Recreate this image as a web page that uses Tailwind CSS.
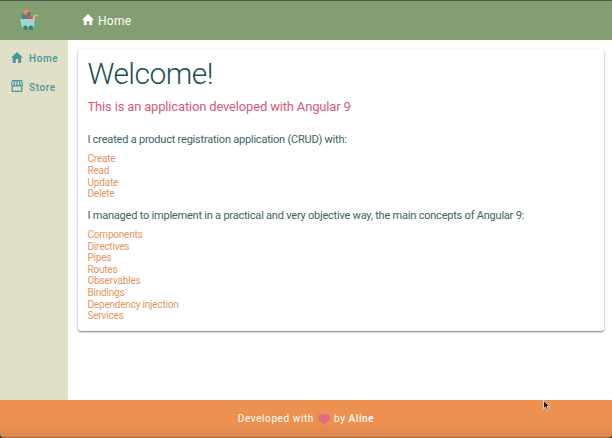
<!DOCTYPE html>
<html lang="en">
<head>
<meta charset="utf-8">
<title>Home</title>
<script src="https://cdn.jsdelivr.net/npm/@tailwindcss/browser@4"></script>
</head>
<body class="relative flex h-[438px] w-[612px] flex-col overflow-hidden bg-white font-['Roboto',sans-serif]">
<header class="flex h-10 shrink-0 items-center border-t border-[#4c5d45] bg-[#849e74] text-white">
  <div class="w-[82px] pl-[19px]">
    <svg class="-mt-px h-[22px] w-5" viewBox="0 0 20 22">
      <path d="M2.500 6 6 2.500 8 10H3z" fill="#5f7c70"/>
      <circle cx="7.500" cy="3.500" r="2.900" fill="#e8894f"/>
      <path d="M3 5.500h5.500v4.500H3z" fill="#4a8587"/>
      <path d="M8.500 3h3v7h-3z" fill="#72705e"/>
      <path d="M8.500 7.500 11 6l2 2v3H8.500z" fill="#dd5368"/>
      <path d="M18.700 6.500h-3.300l-1 5" fill="none" stroke="#e9b56c" stroke-width="1.700"/>
      <path d="M1 10h14.700l-.7 8.500H3z" fill="#99d9d1"/>
      <circle cx="6.500" cy="18.800" r="2.300" fill="#347f88"/>
      <circle cx="12" cy="18.800" r="2.300" fill="#347f88"/>
    </svg>
  </div>
  <svg class="-mt-[3px] h-[11px] w-3" viewBox="2 3 20 17" preserveAspectRatio="none" fill="currentColor"><path d="M10 20v-6h4v6h5v-8h3L12 3 2 12h3v8z"/></svg>
  <span class="ml-[4px] text-[12px] leading-5 tracking-[0.300px]">Home</span>
</header>
<div class="flex h-[360px] shrink-0">
  <nav class="flex w-[68px] shrink-0 flex-col bg-[#e0e0c6] pt-[4px] text-[10px] font-medium tracking-[0.600px] text-[#4b9699]">
    <a class="flex h-[29px] items-center pl-[11px]"><svg class="-mt-[3px] mr-[6px] h-[11px] w-3" viewBox="2 3 20 17" preserveAspectRatio="none" fill="currentColor"><path d="M10 20v-6h4v6h5v-8h3L12 3 2 12h3v8z"/></svg><span>Home</span></a>
    <a class="flex h-[29px] items-center pl-[11px]"><svg class="-mt-[3px] mr-[6px] h-3 w-3" viewBox="2 3 20 18" preserveAspectRatio="none" fill="currentColor"><path d="M21.900 8.890l-1.050-4.370c-.22-.900-1-1.520-1.910-1.520H5.050c-.9 0-1.690.63-1.900 1.520L2.100 8.890c-.24 1.020-.02 2.060.62 2.880.08.110.190.190.280.290V19c0 1.100.9 2 2 2h14c1.100 0 2-.9 2-2v-6.940c.09-.09.200-.18.280-.28.640-.82.870-1.870.62-2.890zm-2.990-3.900l1.050 4.370c.1.420.01.840-.25 1.170-.14.180-.44.470-.94.470-.61 0-1.140-.49-1.210-1.140L16.980 5l1.930-.01zM13 5h1.960l.54 4.520c.05.390-.07.780-.33 1.070-.22.260-.54.410-.95.410-.67 0-1.220-.59-1.220-1.310V5zM8.490 9.520L9.040 5H11v4.690c0 .72-.55 1.310-1.290 1.310-.34 0-.65-.15-.89-.41-.25-.29-.37-.68-.33-1.070zm-4.450-.16L5.050 5h1.970l-.58 4.860c-.08.650-.6 1.140-1.210 1.140-.49 0-.8-.29-.93-.47-.27-.32-.36-.75-.26-1.170zM5 19v-6.030c.08.010.150.030.230.030.87 0 1.660-.36 2.240-.95.600.6 1.400.95 2.310.95.870 0 1.650-.36 2.230-.93.590.57 1.390.93 2.290.93.840 0 1.640-.35 2.240-.95.580.59 1.370.95 2.240.95.080 0 .150-.02.230-.03V19H5z"/></svg><span>Store</span></a>
  </nav>
  <main class="flex-1 pt-[9px] pr-2 pl-[10px]">
    <section class="h-[282px] rounded-[3px] bg-white pt-[9px] pr-[9px] pl-[9.500px] text-[#3d6364] shadow-[0_1px_3px_rgba(0,0,0,0.28),0_1px_1px_rgba(0,0,0,0.3)]">
      <h1 class="text-[30px] leading-[32px] font-light tracking-[-0.550px] text-[#1f5052]">Welcome!</h1>
      <h2 class="mt-[8px] text-[13px] leading-[18px] tracking-[-0.170px] text-[#d75b7b]">This is an application developed with Angular 9</h2>
      <p class="mt-[17px] text-[11px] leading-[14px] tracking-[-0.215px]">I created a product registration application (CRUD) with:</p>
      <ul class="mt-[6.400px] text-[10px] leading-[11.600px] tracking-[-0.200px] text-[#e39660]"><li>Create</li><li>Read</li><li>Update</li><li>Delete</li></ul>
      <p class="mt-[9.200px] text-[11px] leading-[14px] tracking-[-0.215px]">I managed to implement in a practical and very objective way, the main concepts of Angular 9:</p>
      <ul class="mt-[6px] text-[10px] leading-[11.600px] tracking-[-0.200px] text-[#e39660]"><li>Components</li><li>Directives</li><li>Pipes</li><li>Routes</li><li>Observables</li><li>Bindings</li><li>Dependency injection</li><li>Services</li></ul>
    </section>
  </main>
</div>
<footer class="flex h-[38px] shrink-0 items-center justify-center border-b border-[#9f683f] bg-linear-to-b from-[#ed9150] from-60% to-[#db874e] text-[10px] tracking-[0.600px] text-white">
  <span>Developed with</span>
  <svg class="mx-[4px] mt-px h-[11px] w-3" viewBox="2 3 20 18.350" preserveAspectRatio="none" fill="#e36a83"><path d="M12 21.350l-1.450-1.320C5.400 15.360 2 12.280 2 8.500 2 5.420 4.420 3 7.500 3c1.740 0 3.410.81 4.500 2.090C13.090 3.810 14.760 3 16.500 3 19.580 3 22 5.420 22 8.500c0 3.780-3.400 6.860-8.550 11.540z"/></svg>
  <span>by <span class="font-medium">Aline</span></span>
</footer>
<svg class="absolute top-[400px] left-[543px] h-[11px] w-[7px]" viewBox="0 0 7 11"><path d="M.5.500v8.200l2-1.800 1.400 3.300 1.500-.7L4 6.500h2.700z" fill="#101820" stroke="#fff" stroke-width=".7"/></svg>
<svg class="absolute bottom-0 left-0 size-1" viewBox="0 0 4 4"><path d="M0 0Q0 4 4 4H0z" fill="#25231f"/></svg>
<svg class="absolute right-0 bottom-0 size-1" viewBox="0 0 4 4"><path d="M4 0Q4 4 0 4H4z" fill="#25231f"/></svg>
</body>
</html>
